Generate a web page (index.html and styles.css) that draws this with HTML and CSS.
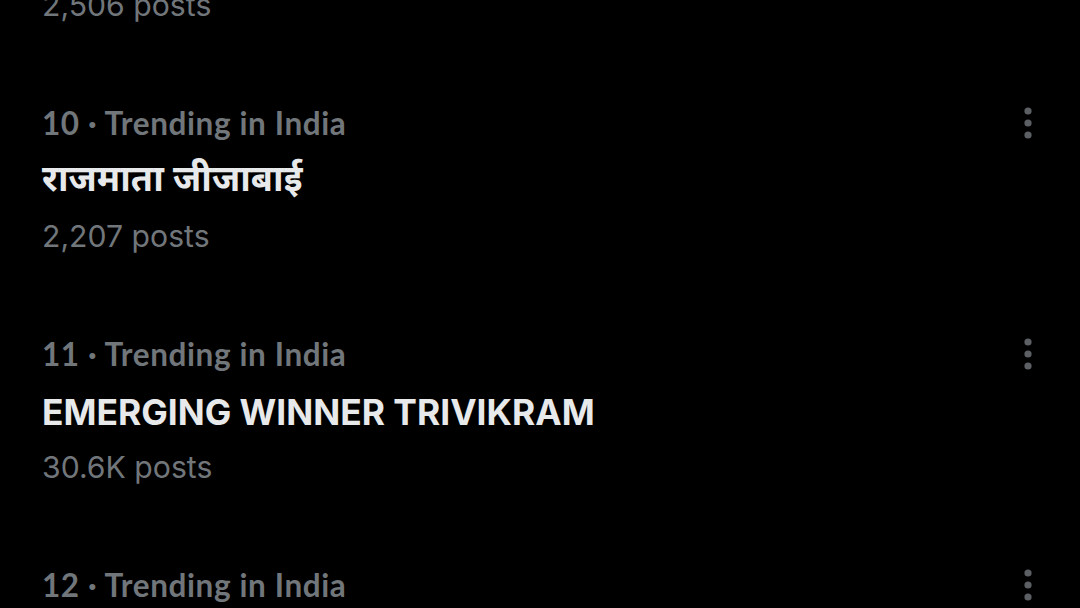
FILE: index.html
```html
<!DOCTYPE html>
<html lang="en">
<head>
<meta charset="utf-8">
<title>Trending</title>
<link rel="stylesheet" href="styles.css">
</head>
<body>
<main class="list">
  <section class="trend">
    <div class="meta-row">
      <div class="meta">9 · Trending in India</div>
    </div>
    <div class="title">Trending topic</div>
    <div class="count">2,506 posts</div>
  </section>
  <section class="trend">
    <div class="meta-row">
      <div class="meta">10 · Trending in India</div>
      <button class="more" aria-label="More"><svg viewBox="0 0 8 32" width="8" height="32"><circle cx="4" cy="4" r="3.6"/><circle cx="4" cy="16" r="3.6"/><circle cx="4" cy="28" r="3.6"/></svg></button>
    </div>
    <div class="title hi" lang="hi">राजमाता जीजाबाई</div>
    <div class="count">2,207 posts</div>
  </section>
  <section class="trend">
    <div class="meta-row">
      <div class="meta">11 · Trending in India</div>
      <button class="more" aria-label="More"><svg viewBox="0 0 8 32" width="8" height="32"><circle cx="4" cy="4" r="3.6"/><circle cx="4" cy="16" r="3.6"/><circle cx="4" cy="28" r="3.6"/></svg></button>
    </div>
    <div class="title">EMERGING WINNER TRIVIKRAM</div>
    <div class="count">30.6K posts</div>
  </section>
  <section class="trend">
    <div class="meta-row">
      <div class="meta">12 · Trending in India</div>
      <button class="more" aria-label="More"><svg viewBox="0 0 8 32" width="8" height="32"><circle cx="4" cy="4" r="3.6"/><circle cx="4" cy="16" r="3.6"/><circle cx="4" cy="28" r="3.6"/></svg></button>
    </div>
    <div class="title">Trending topic</div>
    <div class="count">12.4K posts</div>
  </section>
</main>
</body>
</html>
```
FILE: styles.css
```css
*, *::before, *::after {
  box-sizing: border-box;
}
html, body {
  margin: 0;
  padding: 0;
  background: #000;
  height: 608px;
  overflow: hidden;
}
.list {
  display: flex;
  flex-direction: column;
  margin-top: -170px;
}
.trend {
  display: flex;
  flex-direction: column;
  padding: 32px 42px 29px 42px;
  height: 231px;
  flex-shrink: 0;
}
.meta-row {
  display: flex;
  align-items: center;
  justify-content: space-between;
  height: 57px;
  padding-top: 3px;
}
.meta {
  font-family: Lato, "Open Sans", sans-serif;
  font-weight: 700;
  font-size: 31.5px;
  letter-spacing: 0.6px;
  line-height: 54px;
  color: #71767b;
}
.more {
  background: none;
  border: 0;
  padding: 0;
  margin-right: 6px;
  display: flex;
  fill: #5c6064;
}
.title {
  font-family: Inter, Roboto, sans-serif;
  font-weight: 700;
  font-size: 35.4px;
  line-height: 53px;
  height: 57px;
  padding-top: 5px;
  color: #e7e9ea;
  white-space: nowrap;
}
.title.hi {
  font-family: "Noto Sans Devanagari", "Lohit Devanagari", "Noto Sans", sans-serif;
  font-size: 36px;
  padding-top: 9px;
  line-height: 48px;
}
.count {
  font-family: Inter, Roboto, sans-serif;
  font-weight: 400;
  font-size: 30.2px;
  line-height: 56px;
  height: 56px;
  padding-top: 1px;
  color: #71767b;
}
```
